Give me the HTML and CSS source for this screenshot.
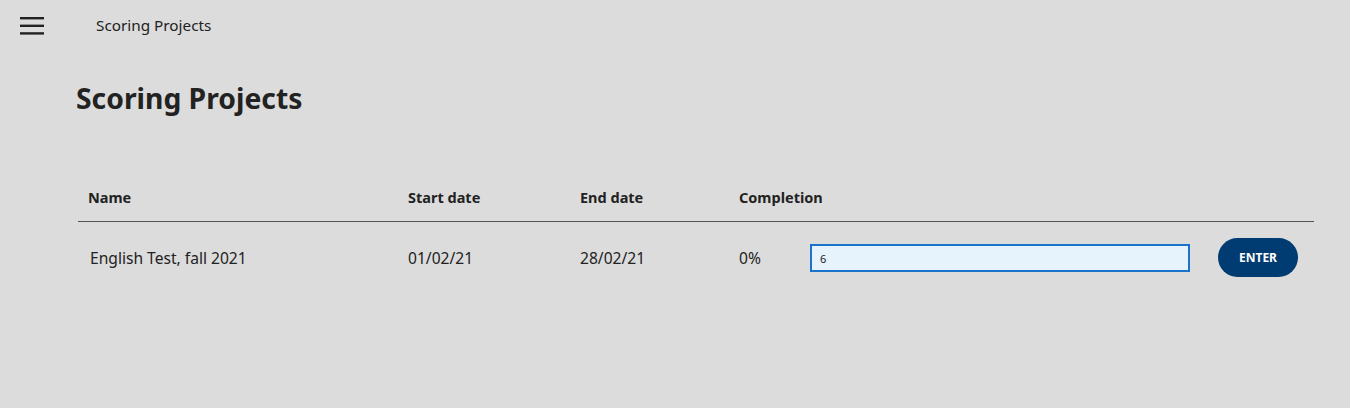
FILE: index.html
```html
<!DOCTYPE html>
<html lang="en">
<head>
  <meta charset="UTF-8" />
  <title>Scoring Projects</title>
  <link rel="stylesheet" href="styles.css">
</head>
<body>
  <header class="topbar">
    <button class="menu-btn" aria-label="Menu">
      <svg width="24" height="20" viewBox="0 0 24 20">
        <rect x="0" y="1" width="24" height="2.4" fill="#222"/>
        <rect x="0" y="8.6" width="24" height="2.4" fill="#222"/>
        <rect x="0" y="16.2" width="24" height="2.4" fill="#222"/>
      </svg>
    </button>
    <span class="crumb">Scoring Projects</span>
  </header>

  <main class="content">
    <h1>Scoring Projects</h1>

    <div class="table">
      <div class="row head">
        <div class="cell">Name</div>
        <div class="cell">Start date</div>
        <div class="cell">End date</div>
        <div class="cell">Completion</div>
      </div>
      <div class="row">
        <div class="cell name">English Test, fall 2021</div>
        <div class="cell">01/02/21</div>
        <div class="cell">28/02/21</div>
        <div class="cell completion">
          <span class="pct">0%</span>
          <input type="text" class="score-input" value="6" />
          <button class="enter-btn">ENTER</button>
        </div>
      </div>
    </div>
  </main>
</body>
</html>
```

FILE: styles.css
```css
body {
  margin: 0;
  background: #dcdcdc;
  color: #222;
  font-family: "Noto Sans", Lato, sans-serif;
  height: 408px;
}

.topbar {
  display: flex;
  align-items: center;
  height: 50px;
  padding-left: 20px;
}

.menu-btn {
  background: none;
  border: none;
  padding: 0;
  width: 24px;
  height: 20px;
  margin-top: 2px;
  cursor: pointer;
}

.crumb {
  margin-left: 52px;
  font-size: 15.3px;
  color: #222;
}

.content {
  padding: 0 36px 0 76px;
}

h1 {
  margin: 30px 0 0;
  font-size: 28.3px;
  font-weight: 700;
  line-height: 36px;
}

.table {
  margin-top: 64px;
  margin-left: 2px;
}

.row {
  display: grid;
  grid-template-columns: 320px 172px 159px 1fr;
  align-items: center;
}

.row.head {
  height: 42px;
  padding-bottom: 8px;
  box-sizing: border-box;
  border-bottom: 1px solid #555;
  font-weight: 700;
}

.cell {
  padding-left: 10px;
  font-size: 15.6px;
}

.row.head .cell {
  font-size: 14.5px;
}

.cell.name {
  padding-left: 12px;
}

.row:not(.head) {
  height: 72px;
}

.completion {
  display: flex;
  align-items: center;
}

.pct {
  width: 71px;
}

.score-input {
  width: 380px;
  height: 28px;
  box-sizing: border-box;
  border: 2px solid #1a73c9;
  background: #e6f3fc;
  padding: 0 8px;
  font-family: inherit;
  font-size: 11px;
  color: #222;
  outline: none;
}

.enter-btn {
  margin-left: 28px;
  width: 80px;
  height: 39px;
  margin-top: -2px;
  border: none;
  border-radius: 20px;
  background: #003b71;
  color: #fff;
  font-family: inherit;
  font-weight: 700;
  font-size: 12px;
  cursor: pointer;
}
```
